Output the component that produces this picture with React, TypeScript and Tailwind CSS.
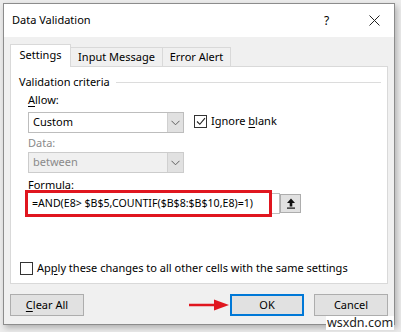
import React from "react";

const font = { fontFamily: '"Noto Sans", "Segoe UI", sans-serif' };

function Chevron({ color = "#606060" }: { color?: string }) {
  return (
    <svg width="9" height="6" viewBox="0 0 9 6">
      <path d="M0.5 0.8 L4.5 4.8 L8.5 0.8" fill="none" stroke={color} strokeWidth="1" />
    </svg>
  );
}

function Select({ value, disabled }: { value: string; disabled?: boolean }) {
  return (
    <div
      className={
        "flex h-[21px] w-[156px] border " +
        (disabled ? "border-[#cccccc] bg-[#f0f0f0]" : "border-[#bdbdbd] bg-white")
      }
    >
      <div className={"flex-1 flex items-center pl-[4px] text-[11px] " + (disabled ? "text-[#8a8a8a]" : "text-black")}>
        {value}
      </div>
      <div className="w-[16px] flex items-center justify-center bg-[#e1e1e1] border-l border-[#d0d0d0]">
        <Chevron />
      </div>
    </div>
  );
}

export default function App() {
  return (
    <div className="w-[401px] h-[332px] bg-[#ececec] pt-[3px] pl-[3px] relative overflow-hidden" style={font}>
      <div className="w-[392px] h-[322px] border border-[#8c8c8c] bg-[#f0f0f0] flex flex-col shadow-[2px_3px_6px_rgba(0,0,0,0.25)]">
        {/* title bar */}
        <div className="h-[33px] bg-white flex items-center pl-[8px] pr-[14px] text-[11px] text-black">
          <div className="flex-1">Data Validation</div>
          <div className="w-[10px] mr-[35px] text-[12px]">?</div>
          <svg width="11" height="11" viewBox="0 0 11 11">
            <path d="M0.5 0.5 L10.5 10.5 M10.5 0.5 L0.5 10.5" stroke="#222" strokeWidth="1" />
          </svg>
        </div>
        {/* body */}
        <div className="flex-1 flex flex-col px-[6px] pt-[7px]">
          {/* tabs */}
          <div className="flex items-end h-[23px] text-[11px] text-black relative z-10">
            <div className="h-[23px] w-[61px] bg-white border border-b-0 border-[#d9d9d9] flex items-center justify-center pb-[1px]">
              Settings
            </div>
            <div className="h-[20px] w-[92px] border border-l-0 border-b-0 border-[#d9d9d9] flex items-center justify-center">
              Input Message
            </div>
            <div className="h-[20px] w-[68px] border border-l-0 border-b-0 border-[#d9d9d9] flex items-center justify-center">
              Error Alert
            </div>
          </div>
          {/* panel */}
          <div className="h-[218px] w-[378px] -mt-[1px] bg-white border border-[#d9d9d9] flex flex-col pl-[8px] text-[11px] text-black">
            <div className="flex items-center mt-[7px] h-[17px]">
              <span>Validation criteria</span>
              <div className="flex-1 h-px bg-[#dcdcdc] ml-[6px] mr-[6px]" />
            </div>
            <div className="pl-[9px] flex flex-col">
              <div className="h-[17px] mt-[1px] flex items-center">
                <span>
                  <span className="underline underline-offset-2">A</span>llow:
                </span>
              </div>
              <div className="flex items-center mt-[3px]">
                <Select value="Custom" />
                <div className="ml-[10px] w-[13px] h-[13px] border border-[#333] flex items-center justify-center -mt-[2px]">
                  <svg width="10" height="9" viewBox="0 0 10 9">
                    <path d="M1 4.5 L3.8 7.3 L9 1.2" fill="none" stroke="#222" strokeWidth="1.1" />
                  </svg>
                </div>
                <span className="ml-[4px] -mt-[2px]">
                  Ignore <span className="underline underline-offset-2">b</span>lank
                </span>
              </div>
              <div className="h-[17px] mt-[2px] flex items-center text-[#8a8a8a]">Data:</div>
              <div>
                <Select value="between" disabled />
              </div>
              <div className="h-[15px] mt-[5px] flex items-center">
                <span>
                  <span className="underline underline-offset-2">F</span>ormula:
                </span>
              </div>
              <div className="flex items-center -ml-[3px] -mt-[3px]">
                <div className="flex items-center">
                  <div className="h-[27px] w-[247px] border-[3px] border-[#e0161f] flex items-center pl-[4px] text-[10.6px] whitespace-nowrap relative z-10">
                    =AND(E8&gt; $B$5,COUNTIF($B$8:$B$10,E8)=1)
                  </div>
                  <div className="h-[21px] w-[9px] -ml-[1px] border border-l-0 border-[#bdbdbd]" />
                </div>
                <div className="w-[21px] h-[19px] bg-[#e1e1e1] border border-[#adadad] flex items-center justify-center">
                  <svg width="10" height="11" viewBox="0 0 10 11">
                    <path d="M5 0.5 L9 5 L6.3 5 L6.3 8.5 L3.7 8.5 L3.7 5 L1 5 Z" fill="#111" />
                    <rect x="1" y="9.5" width="8" height="1.2" fill="#111" />
                  </svg>
                </div>
              </div>
            </div>
            <div className="flex items-center mt-[43px] ml-[1px]">
              <div className="w-[13px] h-[13px] border border-[#333] bg-white" />
              <span className="ml-[4px]">
                Ap<span className="underline underline-offset-2">p</span>ly these changes to all other cells with the same settings
              </span>
            </div>
          </div>
          {/* footer */}
          <div className="flex mt-[10px] text-[11px] text-black">
            <div className="w-[74px] h-[22px] bg-[#e1e1e1] border border-[#adadad] flex items-center justify-center">
              <span>
                <span className="underline underline-offset-2">C</span>lear All
              </span>
            </div>
            <div className="flex-1" />
            <div className="w-[74px] h-[22px] bg-[#e1e1e1] border-2 border-[#0078d7] flex items-center justify-center">
              OK
            </div>
            <div className="w-[74px] h-[22px] ml-[10px] bg-[#e1e1e1] border border-[#adadad] flex items-center justify-center">
              Cancel
            </div>
          </div>
        </div>
      </div>
      {/* red arrow annotation */}
      <svg className="absolute left-[188px] top-[298px]" width="42" height="14" viewBox="0 0 42 14">
        <path d="M1 7 L28 7" stroke="#e0161f" strokeWidth="2.5" />
        <path d="M26 1.5 L41 7 L26 12.5 Z" fill="#e0161f" />
      </svg>
      {/* watermark */}
      <div className="absolute left-[326px] top-[316px] bg-white px-[1px] text-[12.5px] leading-[14px] text-[#222]" style={font}>
        wsxdn.com
      </div>
    </div>
  );
}
